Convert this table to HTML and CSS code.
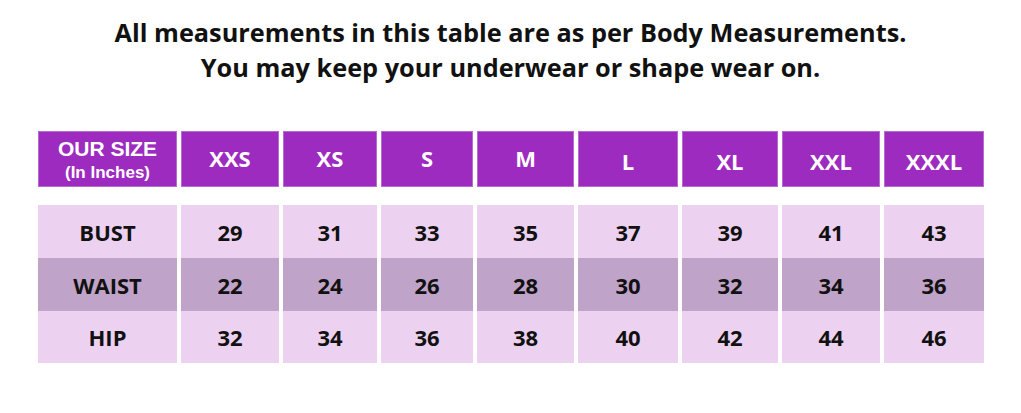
FILE: index.html
```html
<!DOCTYPE html>
<html lang="en">
<head>
<meta charset="utf-8">
<title>Size Chart</title>
<link rel="stylesheet" href="styles.css">
</head>
<body>
<div class="page">
  <div class="title">
    <div>All measurements in this table are as per Body Measurements.</div>
    <div>You may keep your underwear or shape wear on.</div>
  </div>
  <div class="chart">
    <div class="grid head">
      <div class="cell first"><span class="our">OUR SIZE</span><span class="inch">(In Inches)</span></div>
      <div class="cell">XXS</div>
      <div class="cell">XS</div>
      <div class="cell">S</div>
      <div class="cell">M</div>
      <div class="cell low">L</div>
      <div class="cell low">XL</div>
      <div class="cell low">XXL</div>
      <div class="cell low">XXXL</div>
    </div>
    <div class="grid row light">
      <div class="cell">BUST</div>
      <div class="cell">29</div><div class="cell">31</div><div class="cell">33</div><div class="cell">35</div>
      <div class="cell">37</div><div class="cell">39</div><div class="cell">41</div><div class="cell">43</div>
    </div>
    <div class="grid row dark">
      <div class="cell">WAIST</div>
      <div class="cell">22</div><div class="cell">24</div><div class="cell">26</div><div class="cell">28</div>
      <div class="cell">30</div><div class="cell">32</div><div class="cell">34</div><div class="cell">36</div>
    </div>
    <div class="grid row light last">
      <div class="cell">HIP</div>
      <div class="cell">32</div><div class="cell">34</div><div class="cell">36</div><div class="cell">38</div>
      <div class="cell">40</div><div class="cell">42</div><div class="cell">44</div><div class="cell">46</div>
    </div>
  </div>
</div>
</body>
</html>
```
FILE: styles.css
```css
html, body {
  margin: 0;
  padding: 0;
  background: #ffffff;
}
.page {
  width: 1021px;
  height: 413px;
  overflow: hidden;
  font-family: "Open Sans", "Liberation Sans", sans-serif;
}
.title {
  padding-top: 15px;
  text-align: center;
  font-weight: 700;
  font-size: 25.3px;
  line-height: 35px;
  color: #111111;
}
.chart {
  margin-top: 46px;
  padding-left: 38px;
}
.grid {
  display: grid;
  grid-template-columns: 139px 98px 94px 92px 97px 100px 96px 98px 100px;
  column-gap: 4px;
  width: 946px;
}
.cell {
  display: flex;
  align-items: center;
  justify-content: center;
  font-weight: 700;
}
.head .cell {
  height: 56px;
  background: #9d2bbf;
  color: #ffffff;
  font-size: 22px;
  box-sizing: border-box;
  border: 1px solid #b46ccd;
  padding-bottom: 2px;
}
.head .cell.low {
  padding-top: 4px;
  padding-bottom: 0;
}
.head .first {
  flex-direction: column;
  font-family: "Liberation Sans", Arial, sans-serif;
  line-height: 1;
  padding-bottom: 0;
}
.our {
  font-size: 21px;
  padding-bottom: 5px;
}
.inch {
  font-size: 17px;
}
.row {
  height: 53px;
}
.row.last {
  height: 52px;
}
.row .cell {
  font-size: 22px;
  color: #111111;
}
.row.light .cell {
  background: #ecd2f0;
}
.row.dark .cell {
  background: #c0a3c8;
}
.head {
  margin-bottom: 18px;
}
```
